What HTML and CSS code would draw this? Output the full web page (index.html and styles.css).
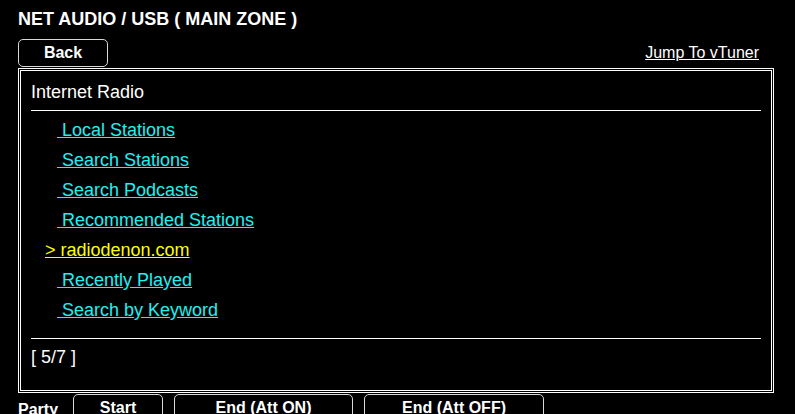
FILE: index.html
```html
<!DOCTYPE html>
<html>
<head>
<meta charset="utf-8">
<title>NET AUDIO / USB</title>
<link rel="stylesheet" href="styles.css">
</head>
<body>
<div class="page">
  <h1 class="title">NET AUDIO / USB ( MAIN ZONE )</h1>
  <div class="toolbar">
    <button class="btn btn-back">Back</button>
    <a class="jump" href="#">Jump To vTuner</a>
  </div>
  <div class="panel">
    <div class="panel-head">Internet Radio</div>
    <div class="rule"></div>
    <ul class="list">
      <li><a class="item" href="#">&nbsp;Local Stations</a></li>
      <li><a class="item" href="#">&nbsp;Search Stations</a></li>
      <li><a class="item" href="#">&nbsp;Search Podcasts</a></li>
      <li><a class="item" href="#">&nbsp;Recommended Stations</a></li>
      <li><a class="item current" href="#">&gt; radiodenon.com</a></li>
      <li><a class="item" href="#">&nbsp;Recently Played</a></li>
      <li><a class="item" href="#">&nbsp;Search by Keyword</a></li>
    </ul>
    <div class="rule rule-bottom"></div>
    <div class="pager">[ 5/7 ]</div>
  </div>
  <div class="party">
    <span class="party-label">Party</span>
    <button class="btn btn-start">Start</button>
    <button class="btn btn-end-on">End (Att ON)</button>
    <button class="btn btn-end-off">End (Att OFF)</button>
  </div>
</div>
</body>
</html>
```

FILE: styles.css
```css
html, body {
  margin: 0;
  padding: 0;
  background: #000;
  color: #fff;
  font-family: "Liberation Sans", Arial, Helvetica, sans-serif;
  overflow: hidden;
}

.page {
  width: 756px;
  margin-left: 18px;
  padding-top: 8px;
}

.title {
  margin: 0;
  font-size: 18px;
  font-weight: bold;
  line-height: 22px;
  height: 22px;
}

.toolbar {
  margin-top: 9px;
  height: 29px;
  display: flex;
  justify-content: space-between;
  align-items: flex-start;
}

.btn {
  box-sizing: border-box;
  height: 28px;
  padding: 0;
  margin: 0;
  background: #000;
  color: #fff;
  border: 1px solid #d8d8d8;
  border-radius: 5px;
  font-family: "Liberation Sans", Arial, Helvetica, sans-serif;
  font-size: 16px;
  font-weight: bold;
  line-height: 26px;
  text-align: center;
}

.btn-back {
  width: 90px;
}

.jump {
  color: #fff;
  font-size: 16px;
  line-height: 28px;
  margin-right: 15px;
  text-decoration: underline;
}

.panel {
  box-sizing: border-box;
  height: 325px;
  border: 3px double #fff;
  padding: 6px 10px 0 10px;
}

.panel-head {
  font-size: 18px;
  line-height: 30px;
  height: 30px;
}

.rule {
  height: 1px;
  background: #fff;
  margin-top: 3px;
}

.list {
  list-style: none;
  margin: 0;
  padding: 4px 0 0 14px;
}

.list li {
  height: 30px;
  line-height: 30px;
  font-size: 18px;
}

.item {
  color: #22f0f0;
  text-decoration: underline;
  margin-left: 12px;
}

.item.current {
  color: #ffff00;
  margin-left: 0;
}

.rule-bottom {
  margin-top: 13px;
}

.pager {
  margin-top: 3px;
  font-size: 18px;
  line-height: 30px;
  height: 30px;
}

.party {
  margin-top: 1px;
  display: flex;
  align-items: flex-start;
}

.party-label {
  font-size: 16px;
  font-weight: bold;
  line-height: 28px;
  margin-top: 0;
  width: 55px;
  padding-top: 2px;
}

.party .btn {
  margin-right: 11px;
}

.btn-start {
  width: 90px;
}

.btn-end-on {
  width: 179px;
}

.btn-end-off {
  width: 180px;
}
```
